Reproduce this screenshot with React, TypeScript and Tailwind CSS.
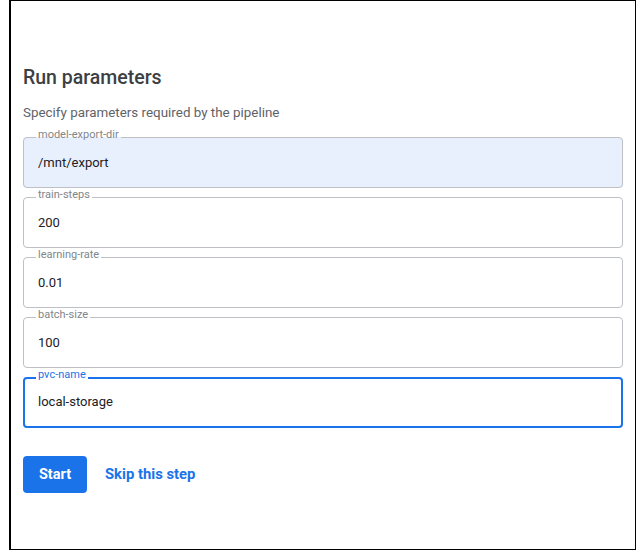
import React from "react"

type Param = {
    name: string,
    value: string,
    filled?: boolean,
    focused?: boolean
}

const params: Param[] = [
    { name: "model-export-dir", value: "/mnt/export", filled: true },
    { name: "train-steps", value: "200" },
    { name: "learning-rate", value: "0.01" },
    { name: "batch-size", value: "100" },
    { name: "pvc-name", value: "local-storage", focused: true },
]

function ParamField({ param }: { param: Param }) {
    if (param.focused) {
        return (
            <fieldset className="rounded-[4px] border-2 border-[#1a73e8] bg-white">
                <legend className="ml-[11px] px-[2px] pb-[6px] text-[11px] leading-[13px] text-[#1a73e8]">
                    {param.name}
                </legend>
                <input
                    readOnly
                    value={param.value}
                    className="h-[39px] w-full bg-transparent px-[13px] pb-[10px] text-[13px] text-[#202124] outline-none"
                />
            </fieldset>
        )
    }

    return (
        <fieldset className={`rounded-[4px] border border-[#bdc1c6] ${param.filled ? "bg-[#e8f0fe]" : "bg-white"}`}>
            <legend className="ml-[12px] px-[2px] pb-[6px] text-[11px] leading-[13px] text-[#80868b]">
                {param.name}
            </legend>
            <input
                readOnly
                value={param.value}
                className="h-[40px] w-full bg-transparent px-[14px] pb-[10px] text-[13px] text-[#202124] outline-none"
            />
        </fieldset>
    )
}

export default function App() {
    return (
        <div className="h-[556px] bg-white font-['Roboto',sans-serif]">
            <div className="ml-[9px] h-[550px] w-[627px] border border-l-2 border-black pl-[12px] pr-[12px] pt-[66px]">
                <h1 className="text-[19.5px] font-medium leading-[22px] text-[#3c4043]">
                    Run parameters
                </h1>
                <p className="mt-[16px] text-[13.4px] leading-[16px] text-[#5f6368]">
                    Specify parameters required by the pipeline
                </p>

                <div className="mt-[7px] flex flex-col">
                    {params.map((p) => (
                        <ParamField key={p.name} param={p} />
                    ))}
                </div>

                <div className="mt-[28px] flex items-center gap-[18px]">
                    <button className="h-[37px] w-[64px] rounded-[4px] bg-[#1a73e8] text-[14.5px] font-bold text-white">
                        Start
                    </button>
                    <button className="text-[14.8px] font-bold text-[#1a73e8]">
                        Skip this step
                    </button>
                </div>
            </div>
        </div>
    )
}
